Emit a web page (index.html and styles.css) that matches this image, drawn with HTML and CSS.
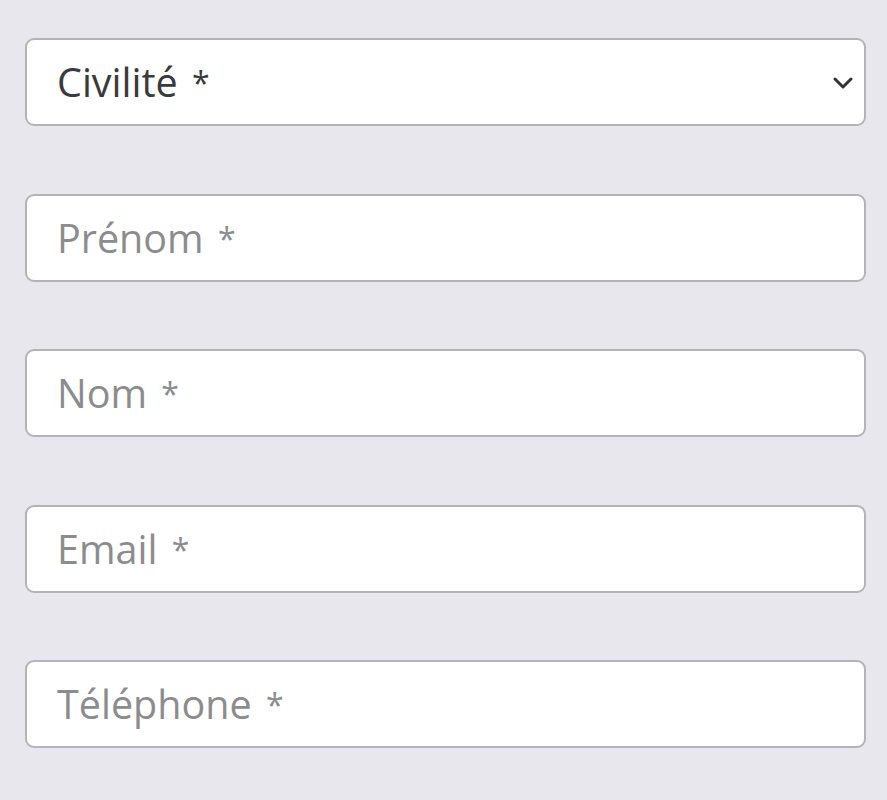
FILE: index.html
```html
<!DOCTYPE html>
<html lang="fr">
<head>
<meta charset="utf-8">
<link rel="stylesheet" href="styles.css">
</head>
<body>
<form class="form">
  <div class="field select-field">
    <span class="value">Civilité <span class="req">*</span></span>
    <svg class="chevron" width="22" height="14" viewBox="0 0 22 14"><path d="M3 3 L11 11 L19 3" fill="none" stroke="#333" stroke-width="3" stroke-linecap="round" stroke-linejoin="round"/></svg>
  </div>
  <div class="field"><span class="placeholder">Prénom <span class="req">*</span></span></div>
  <div class="field"><span class="placeholder">Nom <span class="req">*</span></span></div>
  <div class="field"><span class="placeholder">Email <span class="req">*</span></span></div>
  <div class="field"><span class="placeholder">Téléphone <span class="req">*</span></span></div>
</form>
</body>
</html>
```
FILE: styles.css
```css
html, body {
  margin: 0;
  padding: 0;
  background: #e7e7ed;
  height: 800px;
  overflow: hidden;
}
body {
  font-family: "Open Sans", "Noto Sans", sans-serif;
}
.form {
  display: flex;
  flex-direction: column;
  gap: 67.5px;
  padding: 38px 21px 0 25px;
}
.field {
  box-sizing: border-box;
  height: 88px;
  background: #fff;
  border: 2px solid #b3b3b8;
  border-radius: 9px;
  display: flex;
  align-items: center;
  padding: 0 30px;
  font-size: 39.5px;
  word-spacing: 4px;
}
.req {
  font-size: 32px;
  vertical-align: 2px;
}
.value { color: #3a3a3c; }
.placeholder { color: #8c8c8e; }
.select-field { justify-content: space-between; padding-right: 10px; }
.chevron { margin-top: 2px; }
```
